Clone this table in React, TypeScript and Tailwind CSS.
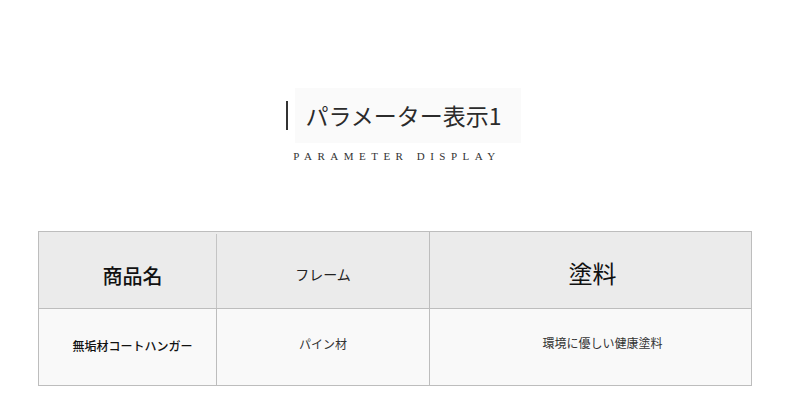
import React from 'react';

const jp = "font-['Noto_Sans_CJK_JP','Noto_Sans',sans-serif]";

export default function App() {
  return (
    <div className={`w-[790px] h-[419px] bg-white ${jp} text-[#222]`}>
      <div className="flex flex-col items-center pt-[88px]">
        <div className="flex items-center ml-[17px]">
          <div className="w-[2px] h-[29px] bg-[#333] mr-[7px]" />
          <div className="flex items-center h-[55px] bg-[#fafafa] pl-[10px] pr-[19px]">
            <h1 className="text-[23px] leading-none text-[#2b2b2b]">パラメーター表示1</h1>
          </div>
        </div>
        <p className="mt-[5px] font-['Liberation_Serif',serif] text-[11px] tracking-[0.5em] text-[#333] ml-[4px]">
          PARAMETER DISPLAY
        </p>
      </div>

      <div className="mt-[66px] mx-[38px] w-[714px] border border-[#bdbdbd]">
        <div className="grid grid-cols-[177px_213px_1fr] h-[77px] bg-[#ebebeb] border-b border-[#bdbdbd]">
          <div className="flex items-center justify-center pl-[10px] pt-[12px] text-[20px] font-medium text-[#111]">商品名</div>
          <div className="flex items-center justify-center pt-[8px] text-[14px] border-l border-[#c4c4c4] mt-[2px]">フレーム</div>
          <div className="flex items-center justify-center pt-[6px] pl-[4px] text-[24px] text-[#111] border-l border-[#bdbdbd]">塗料</div>
        </div>
        <div className="grid grid-cols-[177px_213px_1fr] h-[76px] bg-[#f9f9f9]">
          <div className="flex items-center justify-center pl-[10px] pb-[2px] text-[12px] font-medium text-[#111]">無垢材コートハンガー</div>
          <div className="flex items-center justify-center pb-[6px] text-[12px] text-[#333] border-l border-[#bdbdbd]">パイン材</div>
          <div className="flex items-center justify-center pb-[8px] pl-[24px] text-[12px] text-[#333] border-l border-[#bdbdbd]">環境に優しい健康塗料</div>
        </div>
      </div>
    </div>
  );
}
